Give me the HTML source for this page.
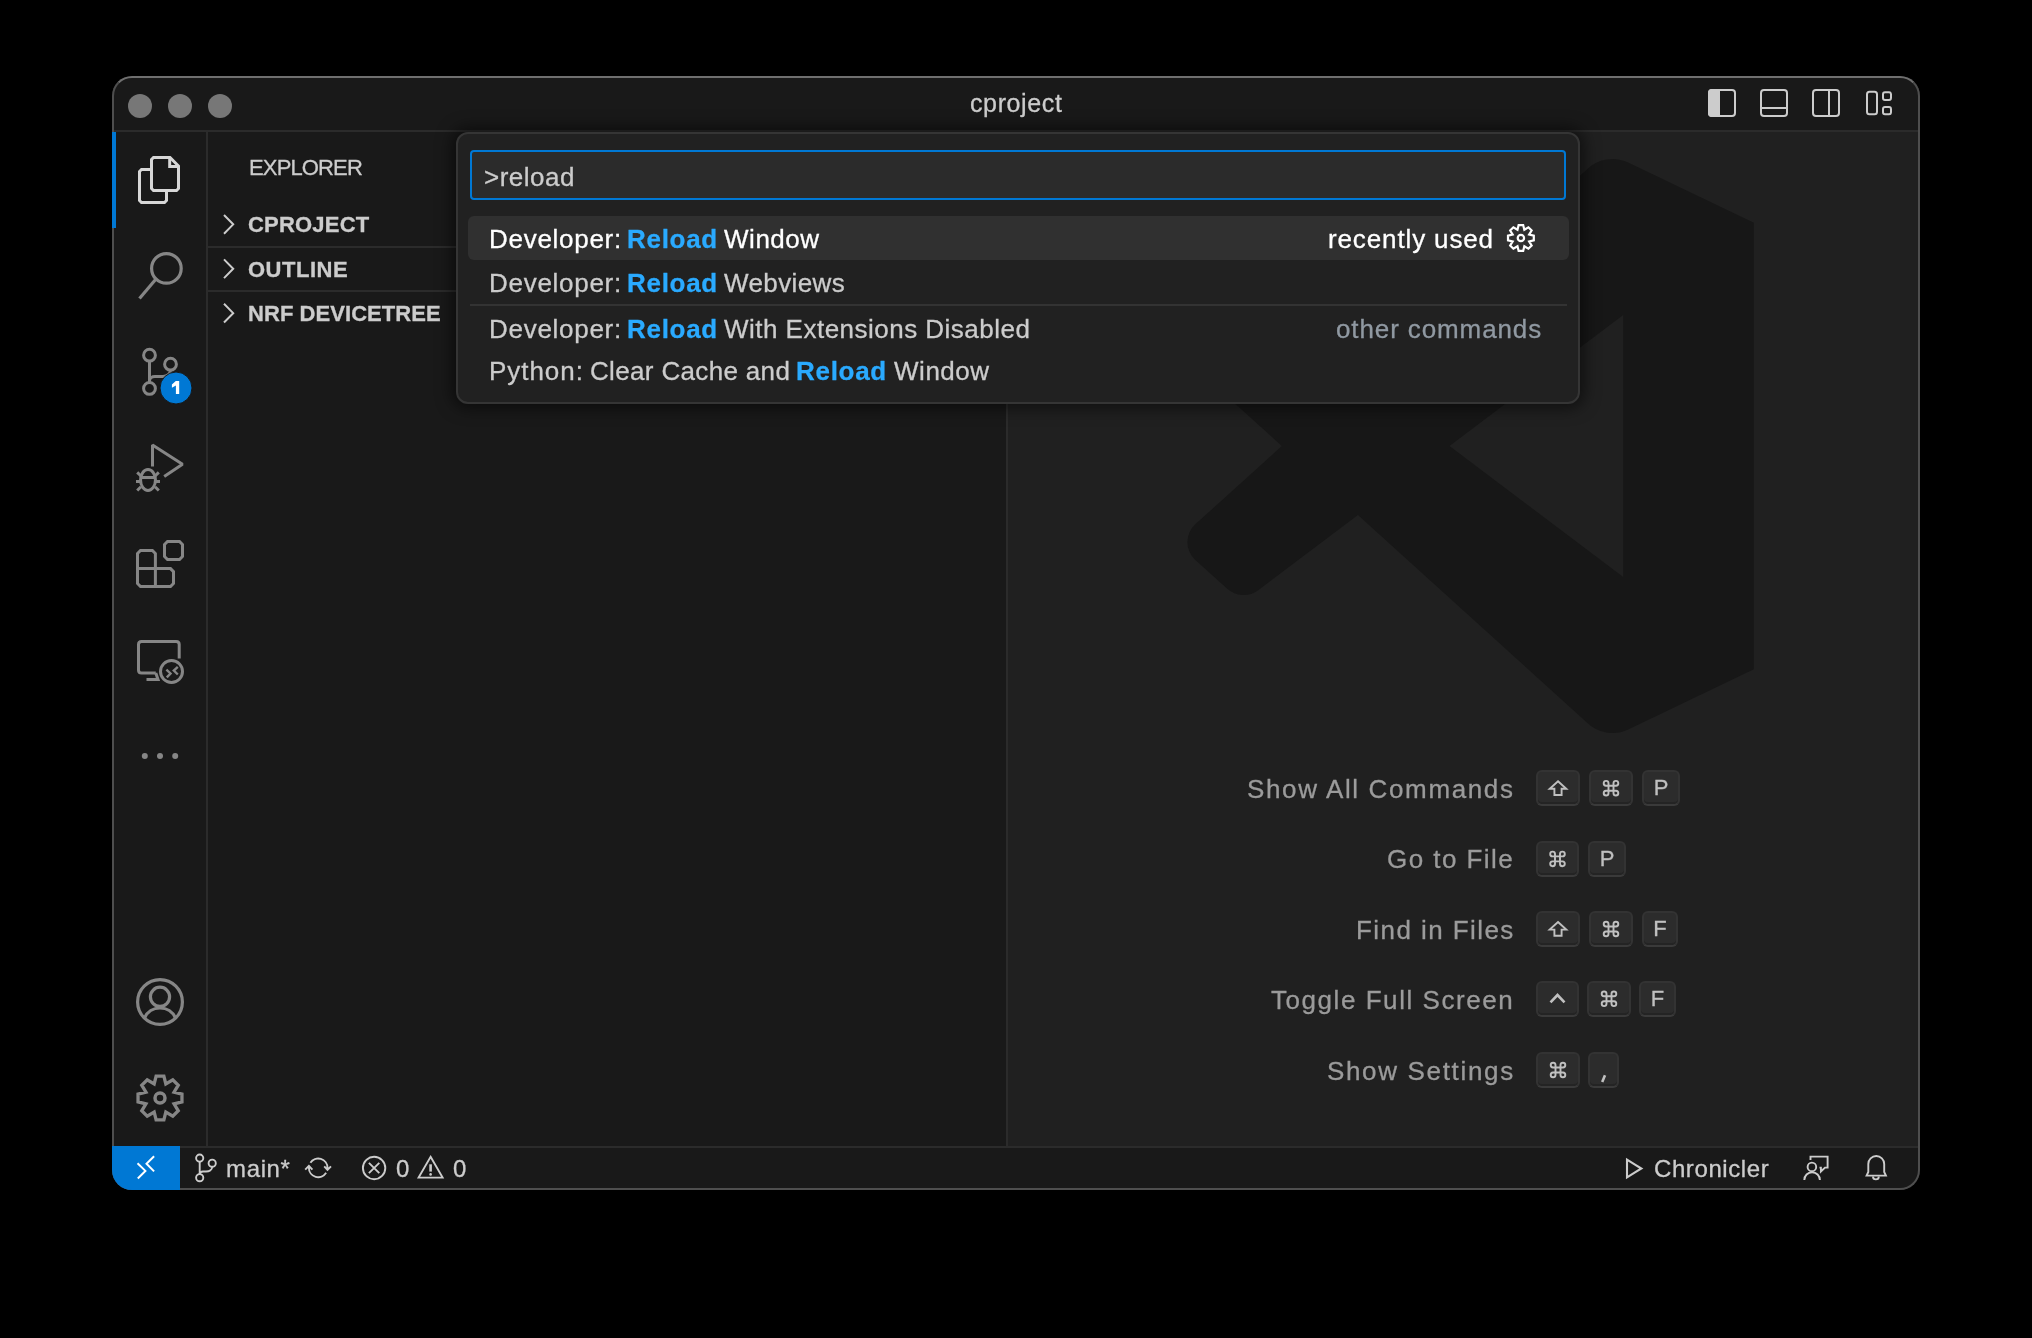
<!DOCTYPE html>
<html><head><meta charset="utf-8">
<style>
html,body{margin:0;padding:0;}
body{width:2032px;height:1338px;background:#000;position:relative;overflow:hidden;font-family:"Liberation Sans",sans-serif;}
.clip{position:absolute;left:0;top:0;width:2032px;height:1338px;clip-path:inset(76px 112px 148px 112px round 20px);}
.a{position:absolute;}
.t{position:absolute;white-space:pre;line-height:1;-webkit-text-stroke:0.3px currentColor;will-change:transform;}
.bg{position:absolute;}
.key{position:absolute;font-size:22px;line-height:32px;color:#c0c0c0;text-align:center;-webkit-text-stroke:0.3px currentColor;will-change:transform;box-sizing:border-box;height:36px;background:#2c2c2c;border:2px solid #333;border-bottom:2px solid #3a3a3a;border-radius:6px;box-shadow:inset 0 -2px 0 #242424;}
</style></head><body>
<div class="clip">
  <!-- base -->
  <div class="bg" style="left:112px;top:76px;width:1808px;height:1114px;background:#191919"></div>
  <!-- title bar border -->
  <div class="bg" style="left:112px;top:130px;width:1808px;height:2px;background:#2b2b2b"></div>
  <!-- activity bar border -->
  <div class="bg" style="left:206px;top:132px;width:2px;height:1014px;background:#2b2b2b"></div>
  <!-- sidebar right border -->
  <div class="bg" style="left:1006px;top:132px;width:2px;height:1014px;background:#2b2b2b"></div>
  <!-- editor -->
  <div class="bg" style="left:1008px;top:132px;width:912px;height:1014px;background:#202020"></div>
  <!-- section borders -->
  <div class="bg" style="left:208px;top:246px;width:798px;height:2px;background:#2b2b2b"></div>
  <div class="bg" style="left:208px;top:290px;width:798px;height:2px;background:#2b2b2b"></div>
  <!-- status bar border -->
  <div class="bg" style="left:112px;top:1146px;width:1808px;height:2px;background:#2b2b2b"></div>

  <!-- watermark logo -->
  <svg class="a" style="left:0;top:0" width="2032" height="1338">
    <g transform="translate(1187.4,157.5) scale(5.81,5.77)" fill="#171717">
      <path fill-rule="evenodd" d="M97.5 11.3 L75.86 0.87 a6.23 6.23 0 0 0-7.1 1.2 L29.35 38.04 L12.19 25.01 a4.16 4.16 0 0 0-5.32.24 L1.36 30.26 a4.17 4.17 0 0 0 0 6.16 L16.25 50 L1.36 63.58 a4.17 4.17 0 0 0 0 6.16 l5.51 5.01 a4.16 4.16 0 0 0 5.32.24 l17.16-13.03 l39.41 35.97 a6.22 6.22 0 0 0 7.1 1.2 L97.5 88.7 Z M75.01 72.7 L45.11 50 L75.01 27.3 Z"/>
    </g>
  </svg>

  <!-- title -->
  <div class="t" style="left:970.3px;top:90.9px;font-size:25px;color:#cccccc;letter-spacing:0.62px">cproject</div>

  <!-- sidebar -->
  <div class="t" style="left:248.5px;top:156.8px;font-size:22px;color:#cccccc;letter-spacing:-0.86px">EXPLORER</div>
  <div class="t" style="left:248px;top:214.1px;font-size:22px;font-weight:700;color:#cccccc;letter-spacing:0.2px">CPROJECT</div>
  <div class="t" style="left:248px;top:258.5px;font-size:22px;font-weight:700;color:#cccccc;letter-spacing:0.5px">OUTLINE</div>
  <div class="t" style="left:248px;top:302.9px;font-size:22px;font-weight:700;color:#cccccc;letter-spacing:0.06px">NRF DEVICETREE</div>

  <!-- watermark shortcuts -->
  <div id="wm">
<div class="t" style="right:517.3px;top:775.99px;font-size:26px;color:#9b9b9b;letter-spacing:1.63px">Show All Commands</div>
<div class="key" style="left:1536px;top:770px;width:44px"></div>
<div class="key" style="left:1589px;top:770px;width:44px"></div>
<div class="key" style="left:1642px;top:770px;width:38px">P</div>
<div class="t" style="right:517.5px;top:845.99px;font-size:26px;color:#9b9b9b;letter-spacing:1.45px">Go to File</div>
<div class="key" style="left:1536px;top:841px;width:43px"></div>
<div class="key" style="left:1588px;top:841px;width:38px">P</div>
<div class="t" style="right:517.5px;top:917.09px;font-size:26px;color:#9b9b9b;letter-spacing:1.43px">Find in Files</div>
<div class="key" style="left:1536px;top:911px;width:44px"></div>
<div class="key" style="left:1589px;top:911px;width:44px"></div>
<div class="key" style="left:1642px;top:911px;width:36px">F</div>
<div class="t" style="right:517.4px;top:986.99px;font-size:26px;color:#9b9b9b;letter-spacing:1.55px">Toggle Full Screen</div>
<div class="key" style="left:1536px;top:981px;width:43px"></div>
<div class="key" style="left:1587px;top:981px;width:44px"></div>
<div class="key" style="left:1639px;top:981px;width:37px">F</div>
<div class="t" style="right:517.3px;top:1057.59px;font-size:26px;color:#9b9b9b;letter-spacing:1.66px">Show Settings</div>
<div class="key" style="left:1536px;top:1052px;width:44px"></div>
<div class="key" style="left:1588px;top:1052px;width:31px"></div>
</div>

  <!-- status bar text -->
  <div class="t" style="left:226px;top:1156.5px;font-size:24px;color:#cccccc;letter-spacing:0.65px">main*</div>
  <div class="t" style="left:396px;top:1156.5px;font-size:24px;color:#cccccc">0</div>
  <div class="t" style="left:452.5px;top:1156.5px;font-size:24px;color:#cccccc">0</div>
  <div class="t" style="left:1654.4px;top:1157.1px;font-size:24px;color:#cccccc;letter-spacing:0.59px">Chronicler</div>

  <!-- command palette -->
  <div class="a" style="left:456px;top:132px;width:1124px;height:272px;box-sizing:border-box;border:2px solid #353535;border-radius:12px;background:#212121;box-shadow:0 0 16px 4px rgba(0,0,0,0.55)"></div>
  <div class="a" style="left:470px;top:150px;width:1096px;height:50px;box-sizing:border-box;border:2px solid #0078d4;border-radius:4px;background:#2b2b2b"></div>
  <div class="t" style="left:483.7px;top:163.5px;font-size:26px;color:#cccccc;letter-spacing:0.5px">&gt;reload</div>
  <div class="a" style="left:468px;top:216px;width:1101px;height:44px;border-radius:6px;background:#303030"></div>
  <div class="a" style="left:470px;top:304px;width:1097px;height:2px;background:#333"></div>

  <div class="t" style="left:488.6px;top:226px;font-size:26px;color:#ffffff;letter-spacing:0.72px">Developer:</div>
  <div class="t" style="left:627px;top:226px;font-size:26px;font-weight:700;color:#2aaaff;letter-spacing:0.7px">Reload</div>
  <div class="t" style="left:724px;top:226px;font-size:26px;color:#ffffff;letter-spacing:0.53px">Window</div>
  <div class="t" style="left:1328px;top:226px;font-size:26px;color:#ffffff;letter-spacing:0.87px">recently used</div>

  <div class="t" style="left:488.6px;top:269.5px;font-size:26px;color:#cccccc;letter-spacing:0.72px">Developer:</div>
  <div class="t" style="left:627px;top:269.5px;font-size:26px;font-weight:700;color:#2aaaff;letter-spacing:0.7px">Reload</div>
  <div class="t" style="left:724px;top:269.5px;font-size:26px;color:#cccccc;letter-spacing:0.39px">Webviews</div>

  <div class="t" style="left:488.6px;top:315.5px;font-size:26px;color:#cccccc;letter-spacing:0.72px">Developer:</div>
  <div class="t" style="left:627px;top:315.5px;font-size:26px;font-weight:700;color:#2aaaff;letter-spacing:0.7px">Reload</div>
  <div class="t" style="left:724px;top:315.5px;font-size:26px;color:#cccccc;letter-spacing:0.48px">With Extensions Disabled</div>
  <div class="t" style="left:1336px;top:315.5px;font-size:26px;color:#9099a2;letter-spacing:0.89px">other commands</div>

  <div class="t" style="left:488.6px;top:358px;font-size:26px;color:#cccccc;letter-spacing:0.95px">Python:</div>
  <div class="t" style="left:589.6px;top:358px;font-size:26px;color:#cccccc;letter-spacing:0.34px">Clear Cache and</div>
  <div class="t" style="left:796.3px;top:358px;font-size:26px;font-weight:700;color:#2aaaff;letter-spacing:0.7px">Reload</div>
  <div class="t" style="left:894px;top:358px;font-size:26px;color:#cccccc;letter-spacing:0.53px">Window</div>

  <!-- icons overlay -->
  <svg id="icons" class="a" style="left:0;top:0" width="2032" height="1338" fill="none" stroke-linejoin="miter">
    <!-- traffic lights -->
    <g fill="#777777" stroke="none">
      <circle cx="140" cy="105.9" r="12"/><circle cx="180" cy="105.9" r="12"/><circle cx="220" cy="105.9" r="12"/>
    </g>
    <!-- layout icons -->
    <g stroke="#cccccc" stroke-width="2">
      <rect x="1709" y="90" width="26" height="26" rx="3"/>
      <path d="M1709 93 Q1709 90 1712 90 H1719 V116 H1712 Q1709 116 1709 113 Z" fill="#cccccc"/>
      <rect x="1761" y="90" width="26" height="26" rx="3"/>
      <path d="M1761 108 H1787"/>
      <rect x="1813" y="90" width="26" height="26" rx="3"/>
      <path d="M1829 90 V116"/>
      <rect x="1867" y="91.7" width="10" height="22.6" rx="2.5"/>
      <rect x="1883" y="92.3" width="8" height="7.6" rx="2"/>
      <rect x="1883" y="107" width="8" height="7.2" rx="2"/>
    </g>
    <!-- activity: files -->
    <g stroke="#d7d7d7" stroke-width="3">
      <path d="M151.5 159.5 L153.5 157.5 H170 L178.5 166 V188.5 L176.5 190.5 H153.5 L151.5 188.5 Z"/>
      <path d="M169.7 157.5 V166.5 H178.5"/>
      <path d="M151.5 169.5 H141.5 L139.5 171.5 V200.5 L141.5 202.5 H164.5 L166.5 200.5 V190.5"/>
    </g>
    <g stroke="#868686" stroke-width="3">
      <!-- search -->
      <circle cx="166.4" cy="268.4" r="14.8" stroke-width="3.2"/>
      <path d="M155.8 279.2 L139.5 298.5" stroke-width="3.2"/>
      <!-- scm -->
      <circle cx="149.5" cy="355.2" r="5.9"/>
      <circle cx="170.5" cy="364.2" r="5.9"/>
      <circle cx="149.5" cy="388.4" r="5.9"/>
      <path d="M149.5 361.1 V382.5"/>
      <path d="M149.5 381 C149.5 378 152 376.5 155 376.5 H163 C167 376.5 170.5 374 170.5 370.1"/>
      <!-- run debug -->
      <path d="M152.5 466.5 V445 L182.5 464.2 L164.2 476.5" stroke-miterlimit="1.6"/>
      <ellipse cx="148" cy="480" rx="7.45" ry="10.5"/>
      <path d="M140.6 477.6 H155.5 M136 481.5 H140.6 M155.5 481.5 H160 M137.2 472.4 L141 476 M158.8 472.4 L155 476 M137.2 490.5 L141 486.7 M158.8 490.5 L155 486.7"/>
      <!-- extensions -->
      <path d="M137.5 553.5 L140.5 550.5 H152.4 L155.4 553.5 V568.6 H170.5 L173.5 571.6 V583.5 L170.5 586.5 H140.5 L137.5 583.5 Z"/>
      <path d="M137.5 568.6 H155.4 V586.5"/>
      <path d="M164.5 544.5 L167.5 541.5 H179.5 L182.5 544.5 V556.5 L179.5 559.5 H167.5 L164.5 556.5 Z"/>
      <!-- remote explorer -->
      <path d="M155.8 673 H141.5 Q138.5 673 138.5 670 V644.5 Q138.5 641.5 141.5 641.5 H176.2 Q179.2 641.5 179.2 644.5 V658.6"/>
      <path d="M146.5 679.4 H158 L155.8 673"/>
      <circle cx="171.5" cy="671.5" r="11"/>
      <path d="M166.4 669.6 L170.5 673.5 L166.8 677.3 M177.8 666.8 L173.8 670.6 L177.8 674.5" stroke-width="2.4"/>
      <!-- accounts -->
      <circle cx="160" cy="1002" r="22.4" stroke-width="3.2"/>
      <circle cx="160" cy="996.8" r="9.6" stroke-width="3.2"/>
      <path d="M144.5 1018 A17 17 0 0 1 175.5 1018" stroke-width="3.2"/>
      <!-- gear -->
      <path stroke-width="3.3" d="M156.13 1076.04 L163.87 1076.04 L165.82 1083.96 L172.79 1079.73 L178.27 1085.21 L174.04 1092.18 L181.96 1094.13 L181.96 1101.87 L174.04 1103.82 L178.27 1110.79 L172.79 1116.27 L165.82 1112.04 L163.87 1119.96 L156.13 1119.96 L154.18 1112.04 L147.21 1116.27 L141.73 1110.79 L145.96 1103.82 L138.04 1101.87 L138.04 1094.13 L145.96 1092.18 L141.73 1085.21 L147.21 1079.73 L154.18 1083.96 Z"/>
      <circle cx="160" cy="1098" r="5" stroke-width="3.5"/>
    </g>
    <g fill="#868686" stroke="none">
      <circle cx="144.8" cy="756" r="3"/><circle cx="160" cy="756" r="3"/><circle cx="175.2" cy="756" r="3"/>
    </g>
    <!-- badge -->
    <circle cx="176" cy="388" r="16" fill="#0078d4" stroke="#181818" stroke-width="1"/>
    <path d="M171.9 384.4 L175.8 381 H179.2 V394 H175.9 V385.5 L171.9 387.7 Z" fill="#ffffff" stroke="none"/>
    <!-- palette gear -->
    <path stroke="#ffffff" stroke-width="2.2" d="M1518.63 225.10 L1523.17 225.10 L1524.31 229.78 L1528.41 227.27 L1531.63 230.49 L1529.12 234.59 L1533.80 235.73 L1533.80 240.27 L1529.12 241.41 L1531.63 245.51 L1528.41 248.73 L1524.31 246.22 L1523.17 250.90 L1518.63 250.90 L1517.49 246.22 L1513.39 248.73 L1510.17 245.51 L1512.68 241.41 L1508.00 240.27 L1508.00 235.73 L1512.68 234.59 L1510.17 230.49 L1513.39 227.27 L1517.49 229.78 Z"/>
    <circle cx="1520.9" cy="238" r="3.2" stroke="#ffffff" stroke-width="2.2"/>
    <!-- sidebar chevrons -->
    <g stroke="#cccccc" stroke-width="2">
      <path d="M224 215 L233.2 224.35 L224 233.7"/>
      <path d="M224 259.4 L233.2 268.75 L224 278.1"/>
      <path d="M224 303.8 L233.2 313.15 L224 322.5"/>
    </g>
    <!-- status bar -->
    <g stroke="#ffffff" stroke-width="2">
      <path d="M137.5 1163.2 L145.4 1170.9 L137.8 1178.5 M154.1 1156.2 L146.5 1163.8 L154.1 1171.4"/>
    </g>
    <g stroke="#cccccc" stroke-width="1.9">
      <circle cx="199.7" cy="1158.1" r="3.6"/>
      <circle cx="212.2" cy="1163.2" r="3.6"/>
      <circle cx="199.7" cy="1177.7" r="3.6"/>
      <path d="M199.7 1161.7 V1174.1"/>
      <path d="M212.2 1166.8 C212.2 1170 209 1171.5 206 1171.5 H203 C201 1171.5 199.7 1172.5 199.7 1174"/>
      <path d="M310.4 1162.8 A9.3 9.3 0 0 1 327.5 1167.9 V1169.8 M324.2 1166.4 L327.5 1169.8 L331 1166.4"/>
      <path d="M326.1 1172.8 A9.3 9.3 0 0 1 308.9 1167.9 V1166.2 M305.2 1169.6 L308.9 1165.9 L312.4 1169.6"/>
      <circle cx="374.1" cy="1168" r="11.2"/>
      <path d="M368.9 1162.8 L379.3 1173.2 M379.3 1162.8 L368.9 1173.2"/>
      <path d="M430.6 1156.8 L442.6 1177.6 H418.6 Z"/>
      <path d="M430.6 1164.3 V1171.6" stroke-width="2.6"/>
      <path d="M1627 1159.6 L1641.4 1168.5 L1627 1177.4 Z" stroke-width="2.1"/>
      <path d="M1810.5 1160 V1156.6 H1827.6 V1167.6 H1825 L1820.9 1171.5 V1167.6 H1819.5"/>
      <circle cx="1811.9" cy="1166.9" r="4.3"/>
      <path d="M1804.3 1180 A7.8 7.8 0 0 1 1819.9 1180"/>
      <path d="M1866.6 1175.6 H1885.9 L1884.2 1172 V1164 A7.95 7.95 0 0 0 1868.3 1164 V1172 Z"/>
      <path d="M1873 1176.5 A2.9 2.9 0 0 0 1878.8 1176.5"/>
    </g>
    <circle cx="430.6" cy="1174.4" r="1.3" fill="#cccccc"/>
    <!-- key glyphs -->
    <path d="M1605 1075.3 L1602.2 1082" stroke="#c0c0c0" stroke-width="2.6"/>
    <g stroke="#c0c0c0" stroke-width="2">
<path transform="translate(1558.00,788.20)" d="M0 -7 L8.3 0.6 H3.6 V6.8 H-3.6 V0.6 H-8.3 Z" stroke-width="1.9"/>
<path transform="translate(1611.00,788.20)" d="M-2.5 -2.5 V-5 A2.4 2.4 0 1 0 -5 -2.5 H5 A2.4 2.4 0 1 0 2.5 -5 V5 A2.4 2.4 0 1 0 5 2.5 H-5 A2.4 2.4 0 1 0 -2.5 5 Z" stroke-width="1.9"/>
<path transform="translate(1557.50,858.90)" d="M-2.5 -2.5 V-5 A2.4 2.4 0 1 0 -5 -2.5 H5 A2.4 2.4 0 1 0 2.5 -5 V5 A2.4 2.4 0 1 0 5 2.5 H-5 A2.4 2.4 0 1 0 -2.5 5 Z" stroke-width="1.9"/>
<path transform="translate(1558.00,929.00)" d="M0 -7 L8.3 0.6 H3.6 V6.8 H-3.6 V0.6 H-8.3 Z" stroke-width="1.9"/>
<path transform="translate(1611.00,929.00)" d="M-2.5 -2.5 V-5 A2.4 2.4 0 1 0 -5 -2.5 H5 A2.4 2.4 0 1 0 2.5 -5 V5 A2.4 2.4 0 1 0 5 2.5 H-5 A2.4 2.4 0 1 0 -2.5 5 Z" stroke-width="1.9"/>
<path transform="translate(1557.50,998.80)" d="M-7 3.5 L0 -3.8 L7 3.5" stroke-width="2.6"/>
<path transform="translate(1609.00,998.80)" d="M-2.5 -2.5 V-5 A2.4 2.4 0 1 0 -5 -2.5 H5 A2.4 2.4 0 1 0 2.5 -5 V5 A2.4 2.4 0 1 0 5 2.5 H-5 A2.4 2.4 0 1 0 -2.5 5 Z" stroke-width="1.9"/>
<path transform="translate(1558.00,1070.00)" d="M-2.5 -2.5 V-5 A2.4 2.4 0 1 0 -5 -2.5 H5 A2.4 2.4 0 1 0 2.5 -5 V5 A2.4 2.4 0 1 0 5 2.5 H-5 A2.4 2.4 0 1 0 -2.5 5 Z" stroke-width="1.9"/>
    </g>
  </svg>
</div>
<!-- window border -->
<div class="a" style="left:112px;top:76px;width:1808px;height:1114px;box-sizing:border-box;border:2px solid #4e4e4e;border-top-color:#6f6f6f;border-radius:20px"></div>
<div class="clip" style="z-index:5">
  <div class="bg" style="left:112px;top:132px;width:4px;height:96px;background:#0078d4"></div>
  <div class="bg" style="left:112px;top:1146px;width:68px;height:44px;background:#0078d4"></div>
  <svg class="a" style="left:0;top:0" width="2032" height="1338" fill="none">
    <path d="M137.5 1163.2 L145.4 1170.9 L137.8 1178.5 M154.1 1156.2 L146.5 1163.8 L154.1 1171.4" stroke="#ffffff" stroke-width="2"/>
  </svg>
</div>
</body></html>
